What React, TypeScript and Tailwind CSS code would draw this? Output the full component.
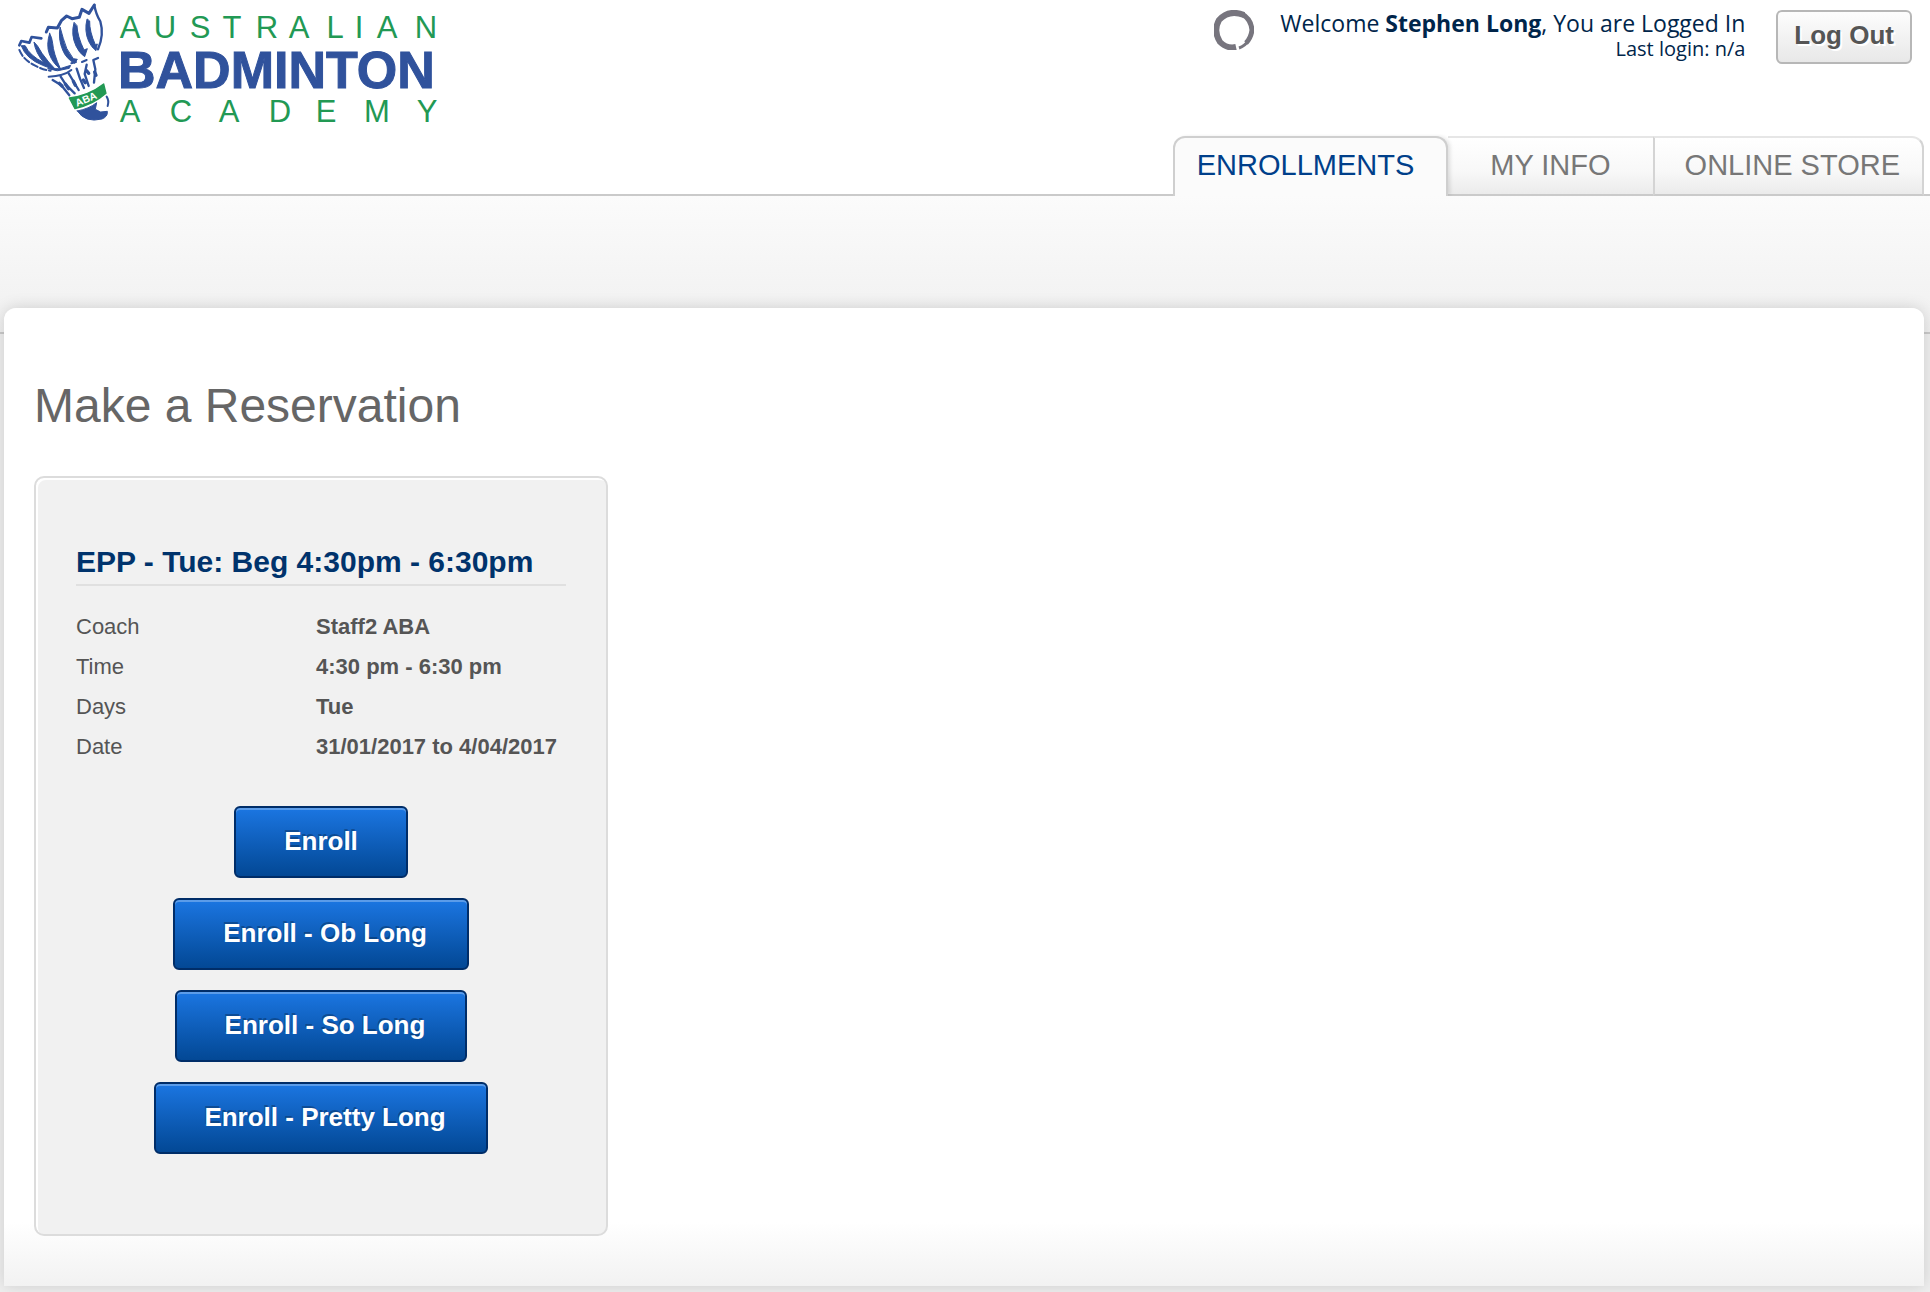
import React from "react";
import clsx from "clsx";

const details = [
  { label: "Coach", value: "Staff2 ABA" },
  { label: "Time", value: "4:30 pm - 6:30 pm" },
  { label: "Days", value: "Tue" },
  { label: "Date", value: "31/01/2017 to 4/04/2017" },
];

const enrollees = ["", "Ob Long", "So Long", "Pretty Long"];

const Logo: React.FC = () => {
  return (
    <svg
      viewBox="0 0 450 130"
      className="h-[130px] w-[450px]"
      role="img"
      aria-label="Australian Badminton Academy"
      fontFamily="'Liberation Sans', Arial, sans-serif"
    >
      <g transform="scale(0.3333) translate(24 0)" stroke="#30529c" fill="none" strokeLinecap="round" strokeLinejoin="round">
        {/* feather tips */}
        <path d="M115 96 L121 82 L148 84 L160 62 L176 48 L192 56 L214 52 L222 28 L243 40 L259 15" strokeWidth="9" />
        <path d="M259 15 Q264 44 277 64 Q289 104 270 148" strokeWidth="7" />
        <path d="M100 115 L71 111 L64 128 L40 123 L34 136" strokeWidth="8" />
        <path d="M34 150 Q46 180 80 196 Q104 210 128 212" strokeWidth="6" strokeDasharray="20 8" />
        {/* vanes */}
        <g fill="#30529c" strokeWidth="3">
          <path d="M125 100 Q114 135 124 162 Q134 190 158 208 Q136 160 134 130 Q132 112 125 100 Z" />
          <path d="M156 82 Q150 118 164 150 Q174 176 200 190 L208 178 L196 176 Q172 146 166 116 Z" />
          <path d="M198 68 Q188 104 204 138 Q214 160 230 170 L238 146 L228 150 Q208 108 207 78 Z" />
          <path d="M237 58 Q228 92 242 124 Q250 142 264 152 L268 132 L262 134 Q244 94 245 64 Z" />
          <path d="M40 138 Q54 176 104 196 L146 212 Q120 186 102 160 Q88 134 78 126 Q82 158 108 188 Q66 168 52 138 Z" />
          <path d="M120 206 L156 206 L188 196 L184 205 L150 212 Z" />
        </g>
        {/* collar and stems */}
        <path d="M122 230 Q168 228 190 210 M190 190 L204 186 M222 186 L236 180" strokeWidth="6" />
        <g strokeWidth="7">
          <path d="M134 240 L160 256 L184 286" />
          <path d="M158 230 L172 252 L200 280" />
          <path d="M182 220 L194 240 L212 270" />
          <path d="M206 206 L216 236 L228 264" />
          <path d="M236 194 L230 222 L242 258" />
          <path d="M270 174 L256 180 L262 208 L258 248" />
        </g>
        <g strokeWidth="10">
          <path d="M154 250 L162 258 M172 252 L182 266 M196 244 L202 256 M226 240 L232 248 M236 212 L242 220 M260 216 L264 226" />
        </g>
        {/* cork */}
        <path d="M184 294 Q244 286 287 252 L294 280 Q256 314 201 326 Z" fill="#229954" stroke="#229954" strokeWidth="4" />
        <path d="M208 333 Q244 326 266 308 L262 328 L278 336 L298 334 Q300 350 282 357 Q232 370 208 333 Z" fill="#30529c" strokeWidth="3" />
        <path d="M296 290 Q304 302 299 318" strokeWidth="6" />
        <text transform="translate(207 320) rotate(-22)" fontSize="31" fontWeight="700" fill="#fff" stroke="none">
          ABA
        </text>
      </g>
      <g fill="#229954" fontSize="31" textAnchor="middle">
        <text x="130 165 200 232 267 299 335 359 387 426" y="38">AUSTRALIAN</text>
        <text x="130 181 229 280 326 377 427" y="122">ACADEMY</text>
      </g>
      <text x="118" y="88" fontSize="52" fontWeight="700" fill="#30529c" stroke="#30529c" strokeWidth="1">
        BADMINTON
      </text>
    </svg>
  );
};

const Spinner: React.FC = () => {
  return (
    <svg viewBox="0 0 40 40" className="h-10 w-10" fill="none" stroke="#77757e" aria-hidden="true">
      <path d="M22 37 Q13 39 6 32 Q-1 21 5 10 Q15 -1 30 5" strokeWidth="6" />
      <path d="M28 4 Q37 9 38 20 Q37 28 32 33" strokeWidth="5" />
      <path d="M34 31 Q31 36 25 38" strokeWidth="3" />
    </svg>
  );
};

const Header: React.FC = () => {
  return (
    <header className="flex h-[196px] items-start justify-between border-b-2 border-[#cacaca] bg-white">
      <Logo />
      <div className="flex h-[196px] flex-col items-end justify-between pr-[6px]">
        <div className="flex items-start pt-[10px] pr-3">
          <Spinner />
          <div className="ml-[26px] text-right font-['Open_Sans','Noto_Sans',sans-serif] text-[#00254a]">
            <p className="text-[23px] leading-[26px]">
              Welcome <strong>Stephen Long</strong>, You are Logged In
            </p>
            <p className="text-[20px] leading-[26px]">Last login: n/a</p>
          </div>
          <button
            type="button"
            className="ml-[31px] h-[54px] rounded-md border-2 border-[#b7b7b7] bg-linear-to-b from-[#fdfdfd] to-[#e8e8e8] px-4 pb-1 text-[26px] leading-[30px] font-bold text-[#555] [text-shadow:2px_2px_0_#fff]"
          >
            Log Out
          </button>
        </div>
        <nav className="flex h-[60px] text-[29px] leading-[54px] text-[#777]">
          <a
            href="#enrollments"
            className="z-10 rounded-t-xl border-2 border-b-0 border-[#cfcfcf] bg-[#fbfbfb] pr-8 pl-[22px] text-[#003f8a] shadow-[3px_0_4px_-1px_rgba(0,0,0,0.12)] [clip-path:inset(-2px_-8px_0_0)]"
          >
            ENROLLMENTS
          </a>
          <a
            href="#my-info"
            className="border-t-2 border-b-2 border-t-[#e6e6e6] border-b-[#cacaca] bg-linear-to-b from-white via-[#f8f8f8] via-60% to-[#ebebeb] px-[42px]"
          >
            MY INFO
          </a>
          <a
            href="#store"
            className="rounded-tr-xl border-2 border-t-[#e6e6e6] border-r-[#d4d4d4] border-b-[#cacaca] border-l-[#d4d4d4] bg-linear-to-b from-white via-[#f8f8f8] via-60% to-[#ebebeb] pr-[22px] pl-[30px]"
          >
            ONLINE STORE
          </a>
        </nav>
      </div>
    </header>
  );
};

const ClassCard: React.FC = () => {
  return (
    <section className="w-[574px] rounded-[10px] border-2 border-[#dcdcdc] bg-[#f1f1f1] px-10 pt-[64px] pb-20 shadow-[inset_2px_2px_0_#fff]">
      <h2 className="border-b-2 border-[#e0e0e0] pb-0.5 text-[30px] leading-[40px] font-bold text-[#00336c]">
        EPP - Tue: Beg 4:30pm - 6:30pm
      </h2>
      <table className="mt-[21px] text-left text-[22px] leading-[40px] text-[#555]">
        <tbody>
          {details.map((row) => (
            <tr key={row.label}>
              <th scope="row" className="w-[240px] p-0 font-normal">
                {row.label}
              </th>
              <td className="p-0 font-bold whitespace-nowrap">{row.value}</td>
            </tr>
          ))}
        </tbody>
      </table>
      <div className="mt-[39px] flex flex-col items-center gap-5">
        {enrollees.map((name) => (
          <button
            key={name}
            type="button"
            className={clsx(
              "h-[72px] rounded-md border-2 border-[#002d68] bg-linear-to-b from-[#1b76e2] to-[#034895] pb-0.5 pl-12 text-[26px] leading-[30px] font-bold text-white shadow-[inset_0_2px_0_#5b9ce9] [text-shadow:-1px_-2px_0_rgba(0,0,0,0.25)]",
              name ? "pr-10" : "pr-12"
            )}
          >
            {name ? `Enroll - ${name}` : "Enroll"}
          </button>
        ))}
      </div>
    </section>
  );
};

const App: React.FC = () => {
  return (
    <div className="min-h-screen bg-[#efefef] pb-[6px] font-['Liberation_Sans',Arial,sans-serif]">
      <Header />
      <div className="h-[138px] border-b-2 border-[#cacaca] bg-linear-to-b from-[#fbfbfb] to-[#f0f0f0]" />
      <main className="relative -mt-[26px] mr-[6px] ml-1 rounded-t-xl bg-linear-to-t from-[#f2f2f2] to-white to-[64px] px-[30px] pt-[66px] pb-[50px] shadow-[0_0_16px_rgba(0,0,0,0.15)]">
        <h1 className="text-[48px] leading-[64px] text-[#666]">Make a Reservation</h1>
        <div className="mt-[38px]">
          <ClassCard />
        </div>
      </main>
    </div>
  );
};

export default App;
